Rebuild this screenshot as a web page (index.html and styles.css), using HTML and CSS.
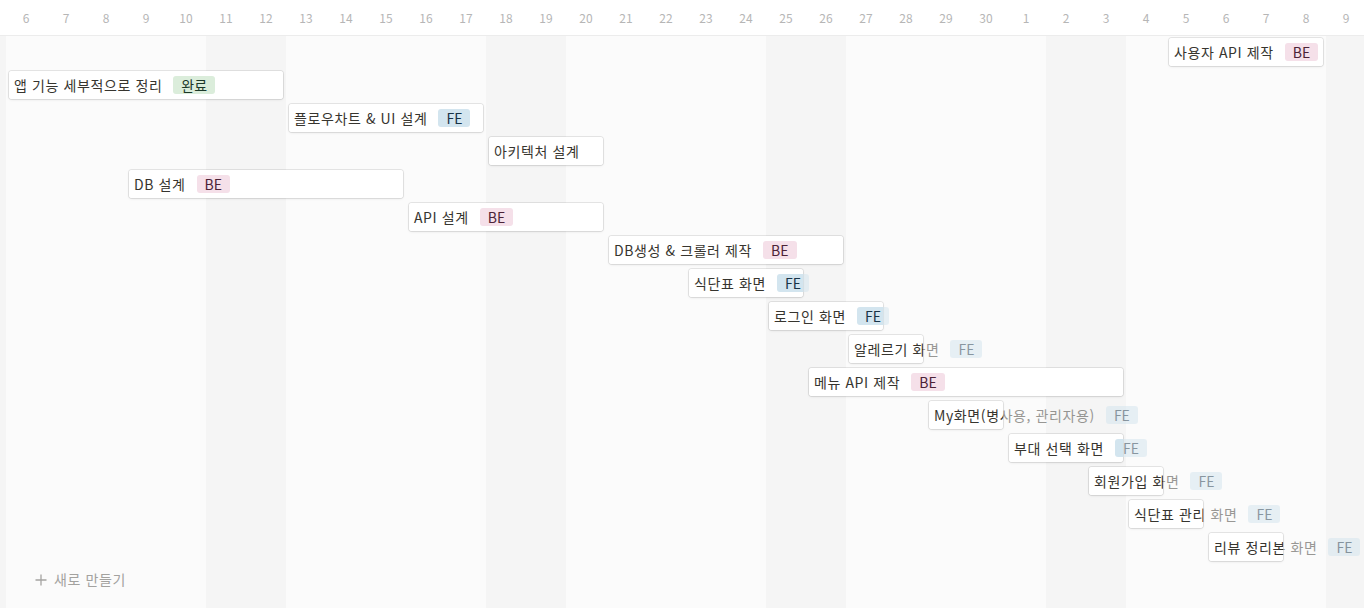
FILE: index.html
```html
<!DOCTYPE html>
<html lang="ko">
<head>
<meta charset="utf-8">
<title>Timeline</title>
<link rel="stylesheet" href="styles.css">
</head>
<body>
<div class="timeline">
  <div class="grid">
    <div class="day part weekend"><div class="day-head"></div><div class="day-body"></div></div>
    <div class="day"><div class="day-head">6</div><div class="day-body"></div></div>
    <div class="day"><div class="day-head">7</div><div class="day-body"></div></div>
    <div class="day"><div class="day-head">8</div><div class="day-body"></div></div>
    <div class="day"><div class="day-head">9</div><div class="day-body"></div></div>
    <div class="day"><div class="day-head">10</div><div class="day-body"></div></div>
    <div class="day weekend"><div class="day-head">11</div><div class="day-body"></div></div>
    <div class="day weekend"><div class="day-head">12</div><div class="day-body"></div></div>
    <div class="day"><div class="day-head">13</div><div class="day-body"></div></div>
    <div class="day"><div class="day-head">14</div><div class="day-body"></div></div>
    <div class="day"><div class="day-head">15</div><div class="day-body"></div></div>
    <div class="day"><div class="day-head">16</div><div class="day-body"></div></div>
    <div class="day"><div class="day-head">17</div><div class="day-body"></div></div>
    <div class="day weekend"><div class="day-head">18</div><div class="day-body"></div></div>
    <div class="day weekend"><div class="day-head">19</div><div class="day-body"></div></div>
    <div class="day"><div class="day-head">20</div><div class="day-body"></div></div>
    <div class="day"><div class="day-head">21</div><div class="day-body"></div></div>
    <div class="day"><div class="day-head">22</div><div class="day-body"></div></div>
    <div class="day"><div class="day-head">23</div><div class="day-body"></div></div>
    <div class="day"><div class="day-head">24</div><div class="day-body"></div></div>
    <div class="day weekend"><div class="day-head">25</div><div class="day-body"></div></div>
    <div class="day weekend"><div class="day-head">26</div><div class="day-body"></div></div>
    <div class="day"><div class="day-head">27</div><div class="day-body"></div></div>
    <div class="day"><div class="day-head">28</div><div class="day-body"></div></div>
    <div class="day"><div class="day-head">29</div><div class="day-body"></div></div>
    <div class="day"><div class="day-head">30</div><div class="day-body"></div></div>
    <div class="day"><div class="day-head">1</div><div class="day-body"></div></div>
    <div class="day weekend"><div class="day-head">2</div><div class="day-body"></div></div>
    <div class="day weekend"><div class="day-head">3</div><div class="day-body"></div></div>
    <div class="day"><div class="day-head">4</div><div class="day-body"></div></div>
    <div class="day"><div class="day-head">5</div><div class="day-body"></div></div>
    <div class="day"><div class="day-head">6</div><div class="day-body"></div></div>
    <div class="day"><div class="day-head">7</div><div class="day-body"></div></div>
    <div class="day"><div class="day-head">8</div><div class="day-body"></div></div>
    <div class="day weekend"><div class="day-head">9</div><div class="day-body"></div></div>
  </div>

  <div class="rows">
    <div class="row"><div class="bar" style="margin-left:1169px;width:154px">
      <div class="line ghost"><span class="title">사용자 API 제작</span><span class="tag be">BE</span></div>
      <div class="clip"><div class="line"><span class="title">사용자 API 제작</span><span class="tag be">BE</span></div></div>
    </div></div>

    <div class="row"><div class="bar" style="margin-left:9px;width:274px">
      <div class="line ghost"><span class="title">앱 기능 세부적으로 정리</span><span class="tag done">완료</span></div>
      <div class="clip"><div class="line"><span class="title">앱 기능 세부적으로 정리</span><span class="tag done">완료</span></div></div>
    </div></div>

    <div class="row"><div class="bar" style="margin-left:289px;width:194px">
      <div class="line ghost"><span class="title">플로우차트 &amp; UI 설계</span><span class="tag fe">FE</span></div>
      <div class="clip"><div class="line"><span class="title">플로우차트 &amp; UI 설계</span><span class="tag fe">FE</span></div></div>
    </div></div>

    <div class="row"><div class="bar" style="margin-left:489px;width:114px">
      <div class="line ghost"><span class="title">아키텍처 설계</span></div>
      <div class="clip"><div class="line"><span class="title">아키텍처 설계</span></div></div>
    </div></div>

    <div class="row"><div class="bar" style="margin-left:129px;width:274px">
      <div class="line ghost"><span class="title">DB 설계</span><span class="tag be">BE</span></div>
      <div class="clip"><div class="line"><span class="title">DB 설계</span><span class="tag be">BE</span></div></div>
    </div></div>

    <div class="row"><div class="bar" style="margin-left:409px;width:194px">
      <div class="line ghost"><span class="title">API 설계</span><span class="tag be">BE</span></div>
      <div class="clip"><div class="line"><span class="title">API 설계</span><span class="tag be">BE</span></div></div>
    </div></div>

    <div class="row"><div class="bar" style="margin-left:609px;width:234px">
      <div class="line ghost"><span class="title">DB생성 &amp; 크롤러 제작</span><span class="tag be">BE</span></div>
      <div class="clip"><div class="line"><span class="title">DB생성 &amp; 크롤러 제작</span><span class="tag be">BE</span></div></div>
    </div></div>

    <div class="row"><div class="bar" style="margin-left:689px;width:114px">
      <div class="line ghost"><span class="title">식단표 화면</span><span class="tag fe">FE</span></div>
      <div class="clip"><div class="line"><span class="title">식단표 화면</span><span class="tag fe">FE</span></div></div>
    </div></div>

    <div class="row"><div class="bar" style="margin-left:769px;width:114px">
      <div class="line ghost"><span class="title">로그인 화면</span><span class="tag fe">FE</span></div>
      <div class="clip"><div class="line"><span class="title">로그인 화면</span><span class="tag fe">FE</span></div></div>
    </div></div>

    <div class="row"><div class="bar" style="margin-left:849px;width:74px">
      <div class="line ghost"><span class="title">알레르기 화면</span><span class="tag fe">FE</span></div>
      <div class="clip"><div class="line"><span class="title">알레르기 화면</span><span class="tag fe">FE</span></div></div>
    </div></div>

    <div class="row"><div class="bar" style="margin-left:809px;width:314px">
      <div class="line ghost"><span class="title">메뉴 API 제작</span><span class="tag be">BE</span></div>
      <div class="clip"><div class="line"><span class="title">메뉴 API 제작</span><span class="tag be">BE</span></div></div>
    </div></div>

    <div class="row"><div class="bar" style="margin-left:929px;width:74px">
      <div class="line ghost"><span class="title">My화면(병사용, 관리자용)</span><span class="tag fe">FE</span></div>
      <div class="clip"><div class="line"><span class="title">My화면(병사용, 관리자용)</span><span class="tag fe">FE</span></div></div>
    </div></div>

    <div class="row"><div class="bar" style="margin-left:1009px;width:114px">
      <div class="line ghost"><span class="title">부대 선택 화면</span><span class="tag fe">FE</span></div>
      <div class="clip"><div class="line"><span class="title">부대 선택 화면</span><span class="tag fe">FE</span></div></div>
    </div></div>

    <div class="row"><div class="bar" style="margin-left:1089px;width:74px">
      <div class="line ghost"><span class="title">회원가입 화면</span><span class="tag fe">FE</span></div>
      <div class="clip"><div class="line"><span class="title">회원가입 화면</span><span class="tag fe">FE</span></div></div>
    </div></div>

    <div class="row"><div class="bar" style="margin-left:1129px;width:74px">
      <div class="line ghost"><span class="title">식단표 관리 화면</span><span class="tag fe">FE</span></div>
      <div class="clip"><div class="line"><span class="title">식단표 관리 화면</span><span class="tag fe">FE</span></div></div>
    </div></div>

    <div class="row"><div class="bar" style="margin-left:1209px;width:74px">
      <div class="line ghost"><span class="title">리뷰 정리본 화면</span><span class="tag fe">FE</span></div>
      <div class="clip"><div class="line"><span class="title">리뷰 정리본 화면</span><span class="tag fe">FE</span></div></div>
    </div></div>

    <div class="row add-row">
      <div class="add-new">
        <svg class="plus" width="12" height="12" viewBox="0 0 12 12" aria-hidden="true">
          <path d="M6 0.5V11.5M0.5 6H11.5" stroke="#a5a4a1" stroke-width="1.3" fill="none"/>
        </svg>
        <span>새로 만들기</span>
      </div>
    </div>
  </div>
</div>
</body>
</html>
```

FILE: styles.css
```css
* { box-sizing: border-box; }

html, body {
  margin: 0;
  padding: 0;
  background: #ffffff;
}

body {
  font-family: "Noto Sans CJK KR", "Noto Sans", sans-serif;
  color: #37352f;
  -webkit-font-smoothing: antialiased;
}

.timeline {
  position: relative;
  width: 1364px;
  height: 608px;
  overflow: hidden;
}

/* background day grid */
.grid {
  display: flex;
  height: 100%;
}

.day {
  flex: 0 0 40px;
  display: flex;
  flex-direction: column;
}

.day.part {
  flex-basis: 6px;
}

.day-head {
  height: 36px;
  flex: 0 0 36px;
  background: #ffffff;
  border-bottom: 1px solid #ececec;
  display: flex;
  align-items: center;
  justify-content: center;
  font-size: 12px;
  color: #b6b6b6;
  padding-bottom: 1px;
}

.day-body {
  flex: 1;
  background: #fbfbfb;
}

.day.weekend .day-body {
  background: #f5f5f5;
}

/* bars layer */
.rows {
  position: absolute;
  top: 36px;
  left: 0;
  right: 0;
  padding-top: 2px;
  display: flex;
  flex-direction: column;
  gap: 5px;
}

.row {
  height: 28px;
  display: flex;
}

.bar {
  position: relative;
  height: 28px;
  flex: 0 0 auto;
  background: #ffffff;
  border-radius: 3px;
  box-shadow: 0 0 0 1px rgba(15, 15, 15, 0.09), 0 1px 3px rgba(15, 15, 15, 0.08);
}

.line {
  display: flex;
  align-items: center;
  gap: 11px;
  height: 28px;
  padding: 0 5px;
  white-space: nowrap;
  font-size: 14px;
  color: #37352f;
}

.line > * { flex: 0 0 auto; }

.ghost {
  opacity: 0.5;
}

.clip {
  position: absolute;
  inset: 0;
  overflow: hidden;
  border-radius: 3px;
  background: #ffffff;
}

.title {
  line-height: 20px;
  letter-spacing: 0.6px;
}

.tag {
  display: inline-flex;
  align-items: center;
  height: 18px;
  padding: 0 8px;
  border-radius: 3px;
  font-size: 14px;
  line-height: 18px;
}

.tag.be { background: #f5e0e9; color: #4c2337; }
.tag.fe { background: #d3e5ef; color: #183347; }
.tag.done { background: #dbeddb; color: #1c3829; }

.add-row {
  align-items: center;
}

.add-new {
  display: flex;
  align-items: center;
  gap: 7px;
  margin-left: 35px;
  font-size: 14px;
  letter-spacing: 0.6px;
  color: #a3a29f;
}

.add-new span { margin-top: -2px; }

.plus { display: block; }
```
